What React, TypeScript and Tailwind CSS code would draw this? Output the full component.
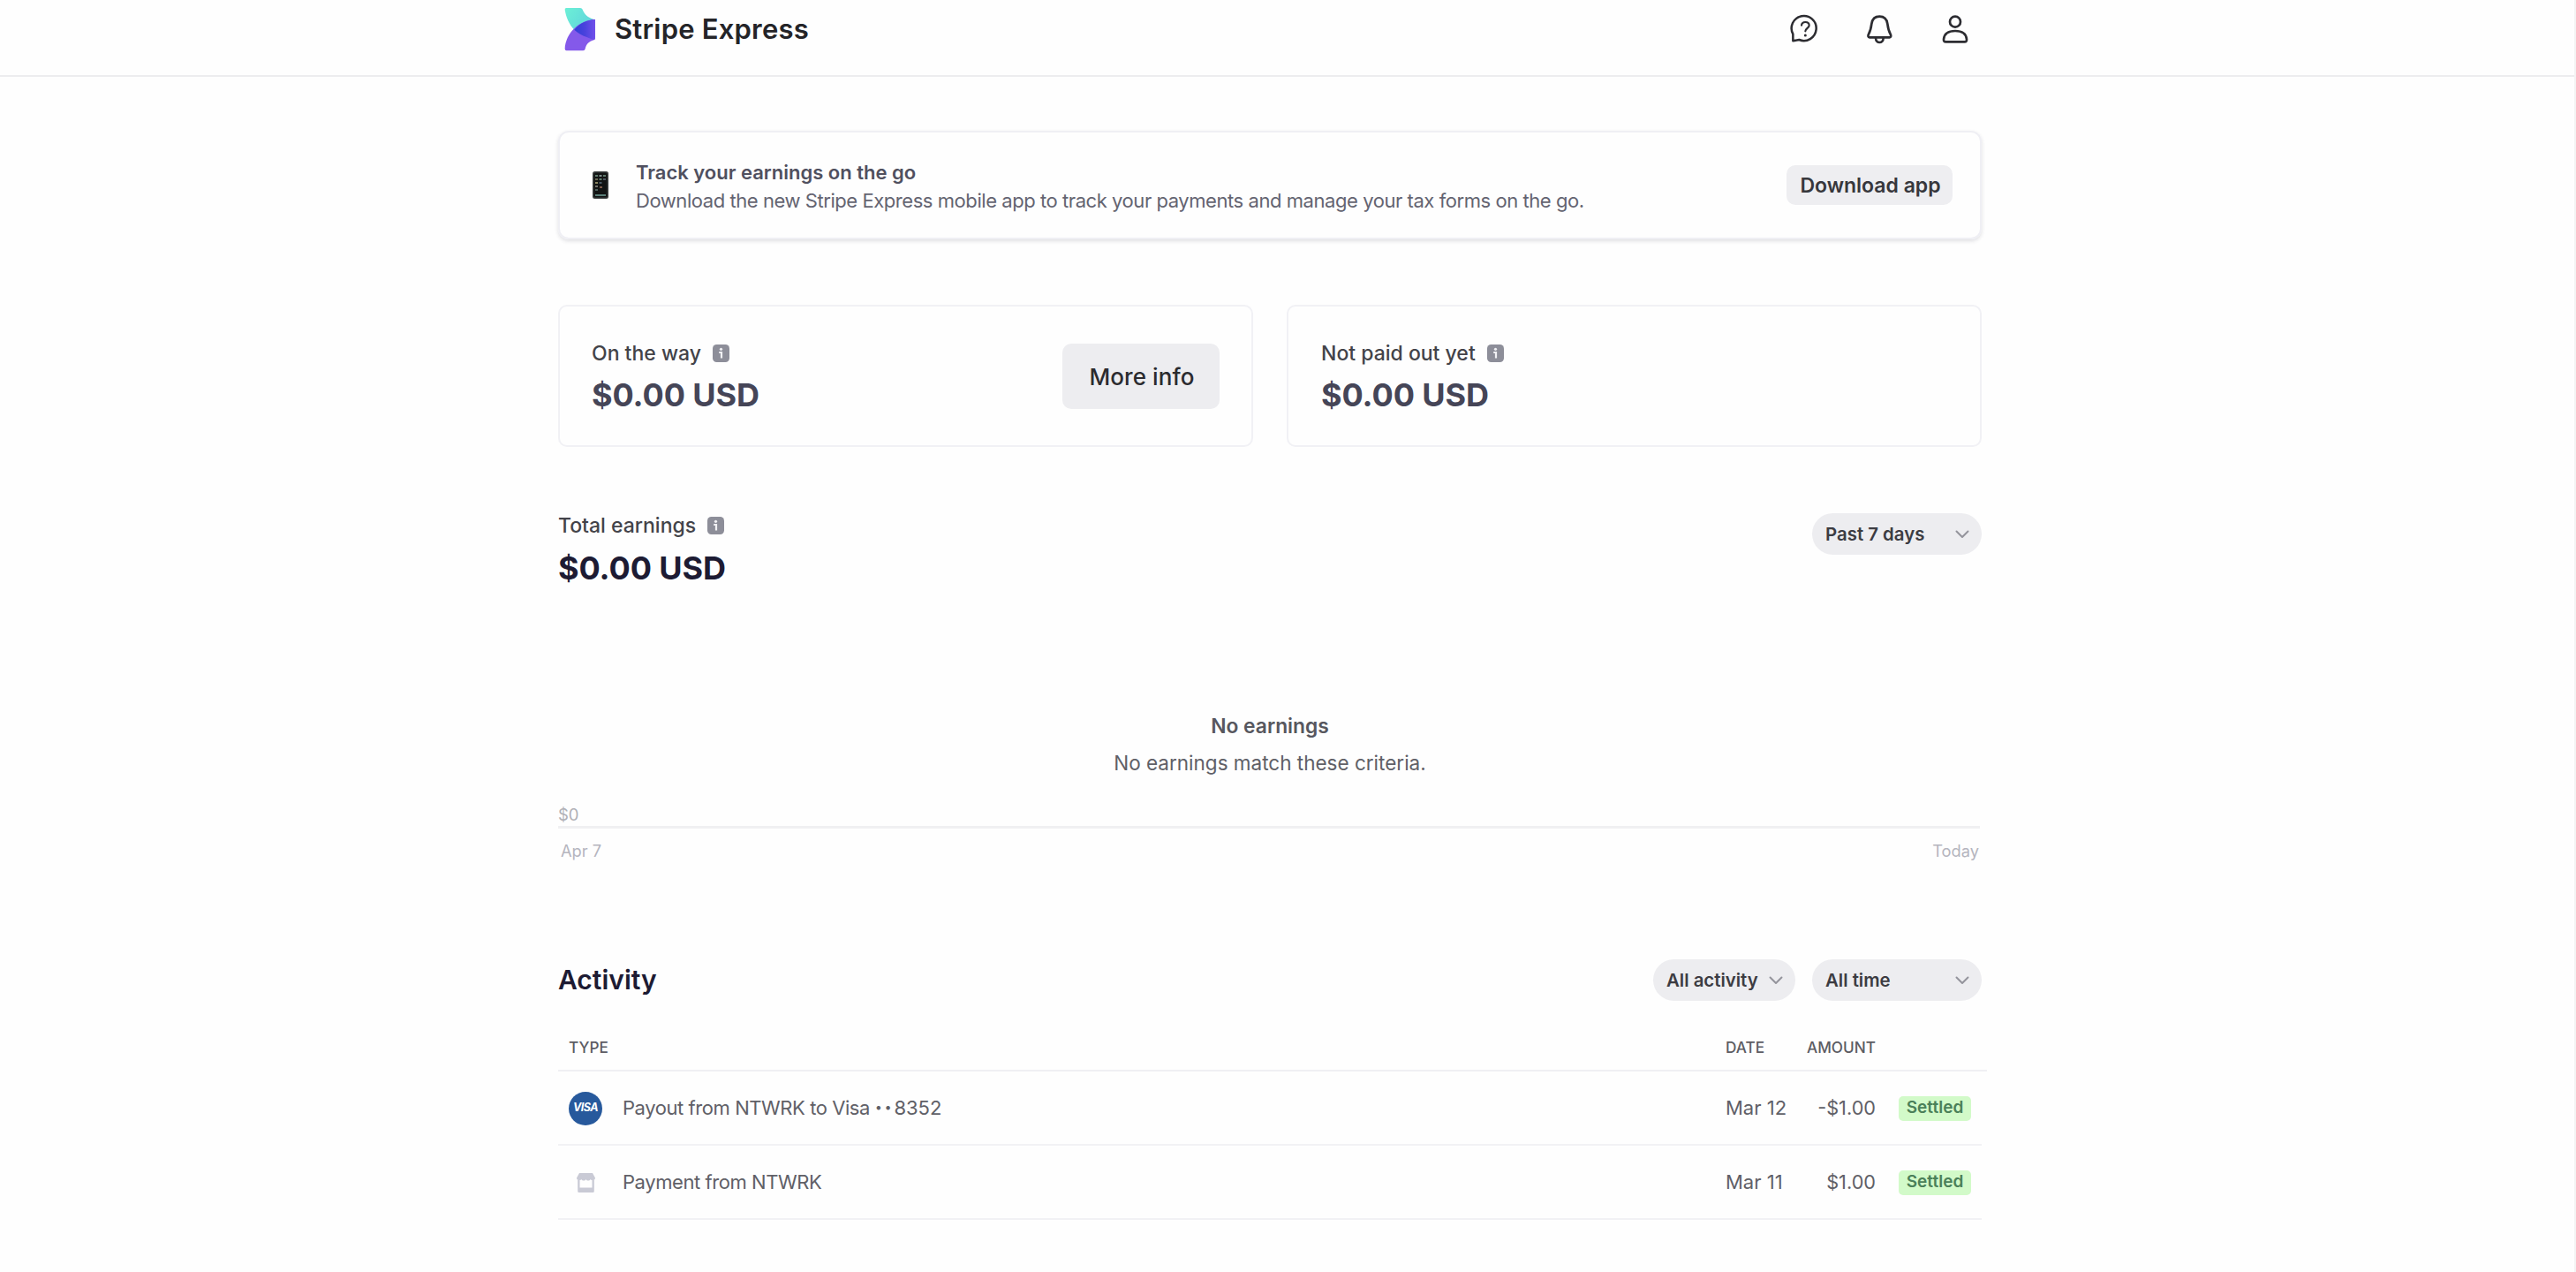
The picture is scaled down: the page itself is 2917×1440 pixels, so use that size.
interface SelectProps {
  label: string;
  className: string;
}

interface Activity {
  kind: "visa" | "store";
  title: string;
  last4?: string;
  date: string;
  amount: string;
}

const activities: Activity[] = [
  { kind: "visa", title: "Payout from NTWRK to Visa", last4: "8352", date: "Mar 12", amount: "-$1.00" },
  { kind: "store", title: "Payment from NTWRK", date: "Mar 11", amount: "$1.00" },
];

const Logo = () => (
  <svg className="h-[50px] w-9" viewBox="28 20 108 150">
    <defs>
      <linearGradient id="teal" x1="0" y1="0" x2="1" y2="0.6">
        <stop offset="0" stopColor="#6cf0d6" />
        <stop offset="1" stopColor="#5fd3dc" />
      </linearGradient>
      <linearGradient id="overlap" x1="0" y1="0" x2="1" y2="0">
        <stop offset="0" stopColor="#2f3fd6" />
        <stop offset="0.5" stopColor="#4a42dd" />
        <stop offset="1" stopColor="#7150ea" />
      </linearGradient>
    </defs>
    <path d="M35 23H82Q88 23 90 28C96 45 109 55 127 61Q133 63 133 68V90C90 124 66 104 62 97C45 80 34 55 30 29Q29 23 35 23Z" fill="url(#teal)" />
    <path d="M35 168H92Q98 168 99 162C103 145 112 137 128 132Q133 131 133 126V62C78 64 33 108 30 162Q30 168 35 168Z" fill="#8459ea" />
    <path d="M62 97C80 75 105 63 133 62V126Q133 131 128 132L104 122C88 116 73 107 62 97Z" fill="url(#overlap)" />
  </svg>
);

const HelpIcon = () => (
  <svg className="h-9 w-[34px]" viewBox="19 20 102 108" fill="none" stroke="#2c2c31" strokeWidth="7.5" strokeLinecap="round" strokeLinejoin="round">
    <path d="M29 114V91A42 42 0 1 1 50 110Z" />
    <path d="M58 61C59 53 64 50 71 50C79 50 84 55 84 61C84 70 71 71 71 81" strokeWidth="6.5" />
    <circle cx="71" cy="95" r="4.500" fill="#2c2c31" stroke="none" />
  </svg>
);

const BellIcon = () => (
  <svg className="h-9 w-[34px]" viewBox="275 20 102 108" fill="none" stroke="#2c2c31" strokeWidth="8" strokeLinecap="round" strokeLinejoin="round">
    <path d="M324 31C307 31 299 42 297 56C295 72 292 82 287 91C284 97 285 102 290 102H358C363 102 364 97 361 91C356 82 353 72 351 56C349 42 341 31 324 31Z" />
    <path d="M311 104C311 124 337 124 337 104" />
  </svg>
);

const UserIcon = () => (
  <svg className="h-9 w-[34px]" viewBox="531 20 102 108" fill="none" stroke="#2c2c31" strokeWidth="8" strokeLinejoin="round">
    <circle cx="582" cy="49" r="18" />
    <path d="M550 117H614Q622 117 621 108C619 88 604 80 582 80C560 80 545 88 543 108Q542 117 550 117Z" />
  </svg>
);

const InfoIcon = () => (
  <svg className="h-5 w-[19px]" viewBox="0 0 19 20">
    <rect width="19" height="20" rx="4.500" fill="#8d8e99" />
    <circle cx="9.500" cy="5.300" r="1.600" fill="#f1f1f4" />
    <path d="M7.200 9H10V15.500" fill="none" stroke="#f1f1f4" strokeWidth="2.200" />
  </svg>
);

const Chevron = () => (
  <svg className="h-[10px] w-4" viewBox="0 0 16 10" fill="none" stroke="#94949c" strokeWidth="2" strokeLinecap="round" strokeLinejoin="round">
    <path d="M1.500 1.500L8 8L14.500 1.500" />
  </svg>
);

const PhoneIcon = () => (
  <svg className="h-[31px] w-[18px]" viewBox="0 0 18 31">
    <rect width="18" height="31" rx="2.500" fill="#3b3f3f" />
    <rect x="1.500" y="1.500" width="15" height="28" rx="1.500" fill="#121414" />
    <g fill="#5d7a6c">
      <rect x="3" y="4" width="3" height="2" />
      <rect x="7.500" y="4" width="3" height="2" fill="#7b8a8a" />
      <rect x="12" y="4" width="3" height="2" />
      <rect x="3" y="8" width="3" height="2" fill="#6a6a55" />
      <rect x="7.500" y="8" width="3" height="2" />
      <rect x="12" y="8" width="3" height="2" fill="#4d5560" />
      <rect x="3" y="12" width="3" height="2" fill="#8a8560" />
      <rect x="7.500" y="12" width="3" height="2" fill="#4b5a66" />
      <rect x="3" y="16" width="3" height="2" fill="#70706a" />
      <rect x="8" y="17" width="3" height="2" fill="#7c5a4a" />
      <rect x="3" y="20" width="3" height="2" fill="#4b5f5a" />
      <rect x="3" y="26" width="12" height="2" fill="#5a7d77" />
    </g>
  </svg>
);

const StoreIcon = () => (
  <svg className="h-[22px] w-[21px]" viewBox="0 0 21 22" fill="#c9cad5">
    <path d="M3 0H18L21 5.500C21 8.500 17 9 15.700 7C14.500 9 11.500 9 10.500 7C9.500 9 6.500 9 5.300 7C4 9 0 8.500 0 5.500Z" />
    <path d="M1.200 8H3.500V16.500H17.500V8H19.800V20.500Q19.800 22 18.300 22H2.700Q1.200 22 1.200 20.500Z" />
  </svg>
);

const Select = ({ label, className }: SelectProps) => (
  <button className={`flex h-[47px] items-center justify-between rounded-full bg-[#ededf0] pt-px pr-[14px] text-[20.4px] font-semibold text-[#3c3c42] ${className}`}>
    {label}
    <Chevron />
  </button>
);

const Label = ({ children }: { children: string }) => (
  <div className="flex items-center gap-[13px] text-[23px] leading-[30px] font-medium text-[#434349]">
    {children}
    <InfoIcon />
  </div>
);

const App = () => {
  return (
    <div className="h-[1440px] w-full overflow-hidden border-r-2 border-[#f4f4f4] bg-[#fefefe] font-['Inter',sans-serif]">
      <header className="h-[87px] border-b-2 border-[#ededef]">
        <div className="ml-[632px] flex h-[66px] w-[1612px] items-center justify-between pr-[13px] pl-[7px]">
          <div className="flex items-center gap-[21px]">
            <Logo />
            <h1 className="text-[31px] font-semibold tracking-[0.2px] text-[#242428]">Stripe Express</h1>
          </div>
          <div className="flex items-center gap-[51px]">
            <HelpIcon />
            <BellIcon />
            <UserIcon />
          </div>
        </div>
      </header>

      <main className="ml-[632px] w-[1612px] pt-[61px]">
        <section className="flex h-[123px] items-center rounded-xl border-2 border-[#efeff4] pr-[31px] pl-[37px] shadow-[0_2px_4px_rgba(60,60,80,0.16)]">
          <PhoneIcon />
          <div className="ml-[31px] flex-1 pt-[2px] text-[22px] leading-8">
            <h2 className="font-semibold text-[#50505f]">Track your earnings on the go</h2>
            <p className="tracking-[-0.44px] text-[#646471]">
              Download the new Stripe Express mobile app to track your payments and manage your tax forms on the go.
            </p>
          </div>
          <button className="h-[45px] w-[188px] rounded-[10px] bg-[#eeeef1] pt-px pl-0.5 text-[23px] font-semibold text-[#37373c]">Download app</button>
        </section>

        <section className="mt-[74px] grid grid-cols-[787px_787px] gap-[38px]">
          <div className="flex h-[161px] items-center justify-between rounded-[10px] border-2 border-[#f1f1f5] pr-[36px] pl-[36px]">
            <div className="pt-0.5">
              <Label>On the way</Label>
              <p className="mt-[10px] text-[36px] leading-[44px] font-bold tracking-[-0.1px] text-[#454557]">$0.00 USD</p>
            </div>
            <button className="h-[74px] w-[178px] rounded-[10px] bg-[#ededf0] pt-0.5 pl-0.5 text-[26px] font-medium tracking-[0.1px] text-[#2b2b2f]">
              More info
            </button>
          </div>
          <div className="flex h-[161px] items-center rounded-[10px] border-2 border-[#f1f1f5] pl-[37px]">
            <div className="pt-0.5">
              <Label>Not paid out yet</Label>
              <p className="mt-[10px] text-[36px] leading-[44px] font-bold tracking-[-0.1px] text-[#454557]">$0.00 USD</p>
            </div>
          </div>
        </section>

        <section className="mt-[74px]">
          <div className="flex items-start justify-between">
            <div>
              <Label>Total earnings</Label>
              <p className="mt-[11px] text-[36px] leading-[44px] font-bold tracking-[-0.1px] text-[#1d1b33]">$0.00 USD</p>
            </div>
            <Select label="Past 7 days" className="mt-px w-48 pl-[15px]" />
          </div>
          <div className="mt-[142px] text-center leading-[30px]">
            <h3 className="text-[22.8px] font-semibold text-[#57575e]">No earnings</h3>
            <p className="mt-3 text-[22.5px] text-[#606067]">No earnings match these criteria.</p>
          </div>
          <div className="mt-[31px] mr-0.5 border-b-3 border-[#f0f0f2] pb-px text-[18.5px] leading-6 text-[#b0b0b6]">$0</div>
          <div className="mt-[13px] flex justify-between px-[3px] text-[18.3px] leading-6 text-[#b5b5be]">
            <span>Apr 7</span>
            <span>Today</span>
          </div>
        </section>

        <section className="mt-[111px]">
          <div className="flex items-center justify-between">
            <h2 className="text-[30px] font-semibold text-[#1d1b33]">Activity</h2>
            <div className="flex gap-[19px]">
              <Select label="All activity" className="w-[161px] pl-[15px]" />
              <Select label="All time" className="w-48 pl-[15px]" />
            </div>
          </div>

          <div className="mt-[27px] -mr-1.5 flex h-[53px] items-center border-b-2 border-[#f0f0f3] pr-1.5 text-[17.2px] font-medium text-[#5c5c63]">
            <span className="flex-1 pl-3">TYPE</span>
            <span className="w-[86px]">DATE</span>
            <span className="w-[84px] text-right">AMOUNT</span>
            <span className="w-[120px]"></span>
          </div>
          {activities.map((a) => (
            <div key={a.title} className="flex h-[84px] items-center border-b-2 border-[#f2f2f5] pt-px text-[22px] text-[#606067]">
              <div className="ml-3 flex w-[38px] justify-center">
                {a.kind === "visa" ? (
                  <div className="flex size-[38px] items-center justify-center rounded-full bg-[#27599c] text-[12.5px] font-bold tracking-[-0.6px] text-white italic">
                    VISA
                  </div>
                ) : (
                  <StoreIcon />
                )}
              </div>
              <div className="ml-[23px] flex-1 tracking-[-0.43px]">
                {a.title}
                {a.last4 && (
                  <>
                    {" "}
                    <span className="font-black tracking-[2.600px]">··</span>
                    <span className="tracking-normal">{a.last4}</span>
                  </>
                )}
              </div>
              <span className="w-[86px]">{a.date}</span>
              <span className="w-[84px] text-right text-[21.7px]">{a.amount}</span>
              <div className="w-[120px] pl-[26px]">
                <span className="flex h-7 w-[82px] items-center justify-center rounded-[5px] bg-[#d2fac9] text-[19px] font-semibold text-[#4b8059]">
                  Settled
                </span>
              </div>
            </div>
          ))}
        </section>
      </main>
    </div>
  );
};

export default App;
